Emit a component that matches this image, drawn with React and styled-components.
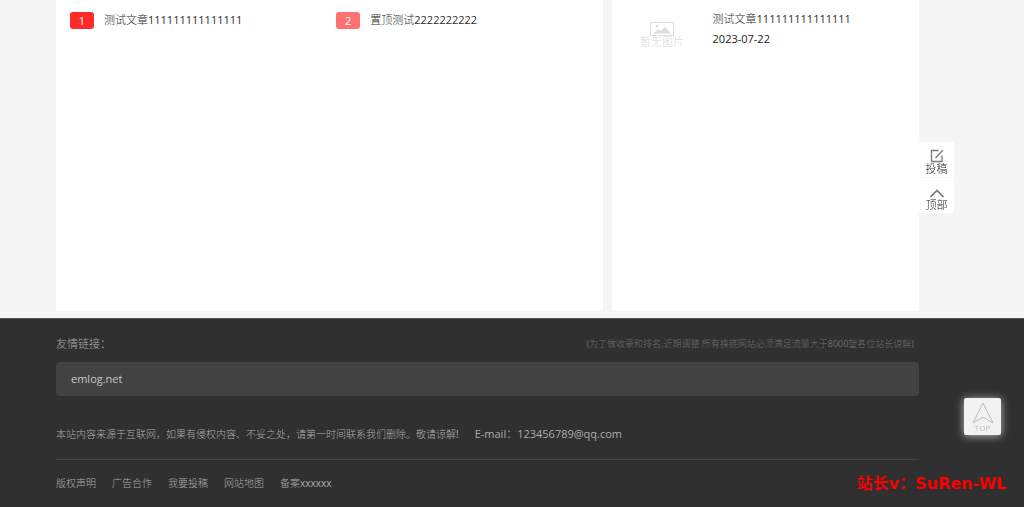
import React from "react";
import styled, { createGlobalStyle } from "styled-components";

const posts = [
	{ id: 1, title: "测试文章111111111111111", color: "#ff2a2a" },
	{ id: 2, title: "置顶测试2222222222", color: "#ff7070" },
];

const footerLinks = ["版权声明", "广告合作", "我要投稿", "网站地图", "备案xxxxxx"];

function EmptyThumb() {
	return (
		<Thumb>
			<svg width="24" height="14" viewBox="0 0 24 14" fill="none">
				<rect x="0.5" y="0.5" width="23" height="13" stroke="#dcdcdc" />
				<circle cx="7" cy="4" r="1.2" fill="#dcdcdc" />
				<path d="M3 11.5 8 7.500l2.500 1.500L15 5l6 6.500Z" fill="#dcdcdc" />
			</svg>
			<ThumbText>暂无图片</ThumbText>
		</Thumb>
	);
}

function App() {
	return (
		<Page>
			<GlobalStyle />
			<Main>
				<PostList>
					{posts.map((post) => (
						<PostItem key={post.id}>
							<Badge $color={post.color}>{post.id}</Badge>
							<TextLink href="#">{post.title}</TextLink>
						</PostItem>
					))}
				</PostList>
				<Sidebar>
					<EmptyThumb />
					<SideInfo>
						<TextLink href="#">测试文章111111111111111</TextLink>
						<time>2023-07-22</time>
					</SideInfo>
				</Sidebar>
			</Main>
			<Footer>
				<FooterHead>
					<FooterTitle>友情链接：</FooterTitle>
					<Note>
						(为了做收录和排名,近期调整 所有换链网站必须满足流量大于8000望各位站长谅解)
					</Note>
				</FooterHead>
				<FriendLinks>
					<a href="#">emlog.net</a>
				</FriendLinks>
				<Statement>
					<span>
						本站内容来源于互联网，如果有侵权内容、不妥之处，请第一时间联系我们删除。敬请谅解!
					</span>
					<Email>E-mail：123456789@qq.com</Email>
				</Statement>
				<FooterNav>
					{footerLinks.map((text) => (
						<a href="#" key={text}>
							{text}
						</a>
					))}
				</FooterNav>
			</Footer>
			<SideTools>
				<ToolButton type="button">
					<svg width="14" height="14" viewBox="0 0 14 14" fill="none" stroke="#777777" strokeWidth="1.3">
						<path d="M8.5 1.5h-7v11H12v-6M5.5 9l7.3-7.8" />
					</svg>
					投稿
				</ToolButton>
				<ToolButton type="button">
					<svg width="14" height="14" viewBox="0 0 14 14" fill="none" stroke="#777777" strokeWidth="1.7">
						<path d="M0.5 12 7 5.500l6.500 6.500" />
					</svg>
					顶部
				</ToolButton>
			</SideTools>
			<TopButton type="button">
				<svg width="22" height="22" viewBox="0 0 22 22" fill="none" stroke="#bcbcbc" aria-hidden="true">
					<path d="M11 1 1 21l10-6 10 6Z" />
				</svg>
				<span>TOP</span>
			</TopButton>
			<Contact>站长v：SuRen-WL</Contact>
		</Page>
	);
}

export default App;

const GlobalStyle = createGlobalStyle`
	* {
		box-sizing: border-box;
	}
	body {
		margin: 0;
		background: #f5f5f5;
		color: #222222;
		font-family: "Open Sans", "Noto Sans CJK SC Light", "Noto Sans CJK SC", sans-serif;
		font-size: 11px;
		line-height: 20px;
	}
	a {
		color: inherit;
		text-decoration: none;
	}
	button {
		border: 0;
		padding: 0;
		font-family: inherit;
		cursor: pointer;
	}
`;
const Page = styled.div`
	min-height: 100vh;
	display: flex;
	flex-direction: column;
`;
const Main = styled.main`
	display: grid;
	grid-template-columns: 16fr 9fr;
	gap: 9px;
	padding: 0 105px 7px 56px;
`;
const PostList = styled.section`
	min-height: 311px;
	padding: 10px 0 0 14px;
	background: #ffffff;
	display: grid;
	grid-template-columns: 1fr 1fr;
	align-content: start;
`;
const PostItem = styled.div`
	display: flex;
	align-items: center;
	gap: 10px;
`;
const Badge = styled.span`
	width: 24px;
	height: 17px;
	border-radius: 3px;
	background: ${(props) => props.$color};
	color: #ffffff;
	line-height: 17px;
	text-align: center;
`;
const TextLink = styled.a`
	color: #2c2c2c;
`;
const Sidebar = styled.aside`
	padding: 9px 20px;
	background: #ffffff;
	display: flex;
	align-items: flex-start;
	gap: 20px;
`;
const Thumb = styled.div`
	width: 61px;
	padding-top: 13px;
	display: flex;
	flex-direction: column;
	align-items: center;
`;
const ThumbText = styled.span`
	color: #dadada;
	font-size: 11px;
	line-height: 12px;
`;
const SideInfo = styled.div`
	display: flex;
	flex-direction: column;
`;
const Footer = styled.footer`
	flex: 1;
	padding: 15px 105px 14px 56px;
	border-top: 1px solid #555555;
	background: #303030;
	color: #acacac;
	font-size: 10px;
`;
const FooterHead = styled.div`
	display: flex;
	justify-content: space-between;
`;
const FooterTitle = styled.span`
	font-size: 11px;
`;
const Note = styled.span`
	padding-right: 5px;
	color: #6c6c6c;
	font-size: 9px;
`;
const FriendLinks = styled.div`
	margin-top: 8px;
	padding: 7px 15px;
	border-radius: 4px;
	background: #424242;
	color: #c8c8c8;
	font-size: 11px;
`;
const Statement = styled.p`
	margin: 0;
	padding: 28px 0 15px;
	border-bottom: 1px solid #444444;
	display: flex;
	gap: 16px;
`;
const Email = styled.span`
	font-size: 11px;
`;
const FooterNav = styled.nav`
	padding-top: 13px;
	display: flex;
	gap: 16px;
`;
const SideTools = styled.div`
	position: fixed;
	top: 142px;
	right: 70px;
	display: flex;
	flex-direction: column;
	gap: 1px;
`;
const ToolButton = styled.button`
	width: 35px;
	height: 35px;
	padding-top: 7px;
	background: #ffffff;
	color: #222222;
	font-size: 11px;
	line-height: 12px;
	display: flex;
	flex-direction: column;
	align-items: center;
`;
const TopButton = styled.button`
	position: fixed;
	right: 23px;
	bottom: 72px;
	width: 37px;
	height: 37px;
	border-radius: 2px;
	background: #f2f2f2;
	box-shadow: 0 1px 8px #bbbbbb;
	color: #bcbcbc;
	font-size: 8px;
	line-height: 8px;
	display: flex;
	flex-direction: column;
	align-items: center;
	justify-content: center;
`;
const Contact = styled.div`
	position: fixed;
	right: 17px;
	bottom: 13px;
	color: #ff0000;
	font-family: "DejaVu Sans", "Noto Sans CJK SC", sans-serif;
	font-size: 16px;
	font-weight: bold;
`;
